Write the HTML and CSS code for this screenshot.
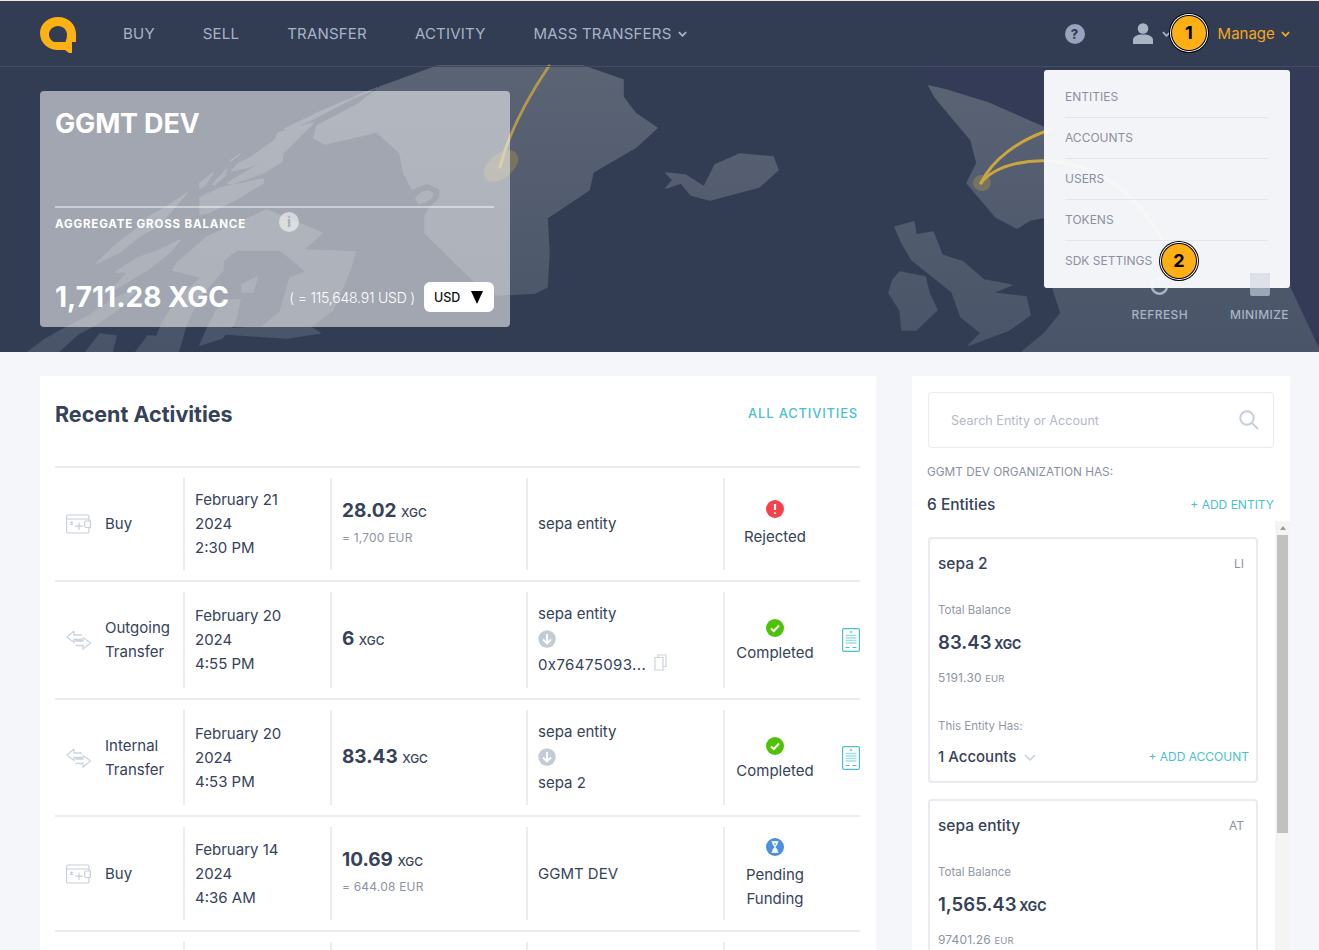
FILE: index.html
```html
<!DOCTYPE html>
<html lang="en">
<head>
  <meta charset="UTF-8">
  <title>GGMT DEV</title>
  <link rel="stylesheet" href="styles.css">
</head>
<body>
  <div class="topline"></div>
  <section class="hero">
    <!-- world map behind the hero -->
    <svg class="map" viewBox="0 1 1319 351" aria-hidden="true">
      <defs>
        <linearGradient id="landfill" gradientUnits="userSpaceOnUse" x1="0" y1="66" x2="0" y2="352">
          <stop offset="0" stop-color="#5a6475"/>
          <stop offset="1" stop-color="#4a5468"/>
        </linearGradient>
      </defs>
      <path class="outer" d="M904 66Q1130 165 1319 350V66Z"/>
      <g fill="url(#landfill)" stroke="url(#landfill)" stroke-width="1.500" stroke-linejoin="round">
        <path d="M438 66H583L623 80V97L635 113 657 128 636 147 593 172 589 190 547 218 549 253 547 287 535 293 497 295 476 283 425 233V216L430 208 440 198 440 189 427 183 412 189 404 173 400 153 377 132 325 144 314 138 317 126 357 105 380 87Z"/>
        <path d="M416 199C418 193 428 189 432 193 434 198 424 204 418 203Z"/>
        <path d="M377 88L322 111 285 129 288 130 313 119 322 114 357 96Z"/>
        <path d="M313 123L278 133 275 140 250 158 238 164 232 171 245 168 263 162 228 183 232 184 263 173 282 161 283 153Z"/>
        <path d="M230 161L240 154 232 160Z"/>
        <path d="M200 183L213 173 205 185 200 188Z"/>
        <path d="M213 184L227 169 222 178 226 175 214 185Z"/>
        <path d="M200 198L220 188 263 179 263 183 233 201 207 213 200 214Z"/>
        <path d="M187 193L165 208 150 216 133 232 118 243 97 263 120 252 140 236 158 226 172 210Z"/>
        <path d="M180 240L160 250 138 258 116 272 128 272 110 292 130 280 150 268 170 252Z"/>
        <path d="M138 288L112 300 87 317 62 330 44 340 28 352H58L78 334 100 322 125 304Z"/>
        <path d="M100 334L86 352H112L116 336Z"/>
        <path d="M148 336L136 352H178L182 338Z"/>
        <path d="M267 210L322 233 303 250 237 250 200 277 173 270 177 263 207 237Z"/>
        <path d="M303 250L355 252 350 270 333 310 310 327 320 333 287 338 226 334 228 329 262 327 280 312 285 295 290 278 306 272 295 262 280 250Z"/>
        <path d="M223 258L207 273 178 298 163 322 150 352H178L187 322 200 297 223 270Z"/>
        <path d="M242 285L257 277 253 292 242 292Z"/>
        <path d="M222 300L208 327 200 345 222 338 235 322 240 300Z"/>
        <path d="M929 86L946 90 988 103 1045 128V217L1030 220 1026 205 1030 220 1017 228 996 217 967 183 977 163 971 140 935 97Z"/>
        <path d="M666 173L685 175 704 187 715 165 740 154 773 157 778 170 759 187 710 200 691 195 681 183 666 188 673 180Z"/>
        <path d="M895 227L914 222 916 235 933 232 942 255 963 262 984 280 1011 285 992 293 1026 297 1030 315 1009 330 969 345 981 333 961 317 952 292 912 260 902 243Z"/>
        <path d="M900 272L925 277 929 293 937 310 916 330 902 330 900 310 889 293 893 280Z"/>
        <path d="M1053 288H1290L1319 350V352H1022L1045 333 1061 313Z"/>
      </g>
      <ellipse class="node" cx="501" cy="166" rx="20" ry="12" transform="rotate(-40 501 166)"/>
      <path class="arc arc-one" d="M549 66C526 100 508 136 500 167"/>
      <ellipse class="node" cx="982" cy="183" rx="9" ry="8"/>
      <path class="arc arc-two" d="M981 183C992 160 1018 140 1050 130"/>
      <path class="arc arc-two" d="M981 183C996 164 1030 158 1060 162 1110 170 1145 205 1165 245"/>
    </svg>

    <header class="topbar">
      <svg class="logo" viewBox="0 0 36 36">
        <path fill-rule="evenodd" d="M18 0C28 0 36 7 36 17V25H32V36H29L25 33H18C8 33 0 26 0 16 0 7 8 0 18 0ZM18 9C13 9 9 13 9 17.500 9 21 11 23.500 14 25H25.500C26.500 22.500 27 20 27 17.500 27 13 23 9 18 9Z"/>
      </svg>
      <nav class="nav">
        <a>BUY</a>
        <a>SELL</a>
        <a>TRANSFER</a>
        <a>ACTIVITY</a>
        <a>MASS TRANSFERS <svg class="chev" viewBox="0 0 10 6"><path d="M1 1l4 4 4-4"/></svg></a>
      </nav>
      <div class="user-area">
        <span class="help">?</span>
        <svg class="person" viewBox="0 0 20 21"><circle cx="10" cy="5.500" r="5.300"/><path d="M0 21V17C0 13.500 4 11.500 10 11.500S20 13.500 20 17V21Z"/></svg>
        <svg class="chev chev-user" viewBox="0 0 10 6"><path d="M1 1l4 4 4-4"/></svg>
        <span class="manage">Manage <svg class="chev" viewBox="0 0 10 6"><path d="M1 1l4 4 4-4"/></svg></span>
      </div>
    </header>

    <div class="hero-body">
      <div class="org-card">
        <h1>GGMT DEV</h1>
        <div class="org-label">
          <span>AGGREGATE GROSS BALANCE</span>
          <span class="info">i</span>
        </div>
        <div class="org-balance">
          <strong>1,711.28 XGC</strong>
          <span class="org-usd">( = 115,648.91 USD )</span>
          <span class="currency">USD <svg viewBox="0 0 12 13"><path d="M0 0H12L6 13Z"/></svg></span>
        </div>
      </div>
      <div class="hero-actions">
        <div class="hero-action">
          <svg viewBox="0 0 20 20"><path d="M17 10A7.500 7.500 0 1 1 13 3.500"/></svg>
          <span>REFRESH</span>
        </div>
        <div class="hero-action">
          <span class="min-box"></span>
          <span>MINIMIZE</span>
        </div>
      </div>
    </div>

    <ul class="manage-menu">
      <li>ENTITIES</li>
      <li>ACCOUNTS</li>
      <li>USERS</li>
      <li>TOKENS</li>
      <li>SDK SETTINGS</li>
    </ul>
    <span class="callout callout-one">1</span>
    <span class="callout callout-two">2</span>
  </section>

  <main class="content">
    <section class="activities">
      <div class="activities-head">
        <h2>Recent Activities</h2>
        <a class="link-all">ALL ACTIVITIES</a>
      </div>

      <div class="row">
        <div class="cell cell-type">
          <svg class="type-icon" viewBox="0 0 25 20"><use href="#wallet"/></svg>
          <span>Buy</span>
        </div>
        <div class="cell cell-lines"><span>February 21</span><span>2024</span><span>2:30 PM</span></div>
        <div class="cell cell-amount">
          <div class="amount">28.02 <small>XGC</small></div>
          <div class="fiat">= 1,700 EUR</div>
        </div>
        <div class="cell cell-lines"><span>sepa entity</span></div>
        <div class="cell cell-status">
          <div class="status status-tall">
            <svg class="st-icon" viewBox="0 0 20 20"><circle cx="10" cy="10" r="9" fill="#f5424a"/><path d="M10 5v6M10 13.500v1.500" stroke="#fff" stroke-width="2.200"/></svg>
            <span>Rejected</span>
          </div>
        </div>
      </div>

      <div class="row">
        <div class="cell cell-type">
          <svg class="type-icon" viewBox="0 0 25 20"><use href="#swap"/></svg>
          <span>Outgoing<br>Transfer</span>
        </div>
        <div class="cell cell-lines"><span>February 20</span><span>2024</span><span>4:55 PM</span></div>
        <div class="cell cell-amount">
          <div class="amount">6 <small>XGC</small></div>
        </div>
        <div class="cell cell-lines cell-route">
          <span>sepa entity</span>
          <svg class="down" viewBox="0 0 18 18"><use href="#down"/></svg>
          <span class="addr addr-hash">0x76475093... <svg class="copy" viewBox="0 0 13 17"><path d="M4 3.500V1H12V12.500H9.500M1 3.500H9V16H1Z"/></svg></span>
        </div>
        <div class="cell cell-status">
          <div class="status">
            <svg class="st-icon" viewBox="0 0 20 20"><use href="#done"/></svg>
            <span>Completed</span>
          </div>
          <svg class="doc" viewBox="0 0 18 24"><use href="#doc"/></svg>
        </div>
      </div>

      <div class="row row-internal">
        <div class="cell cell-type">
          <svg class="type-icon" viewBox="0 0 25 20"><use href="#swap"/></svg>
          <span>Internal<br>Transfer</span>
        </div>
        <div class="cell cell-lines"><span>February 20</span><span>2024</span><span>4:53 PM</span></div>
        <div class="cell cell-amount">
          <div class="amount">83.43 <small>XGC</small></div>
        </div>
        <div class="cell cell-lines cell-route">
          <span>sepa entity</span>
          <svg class="down" viewBox="0 0 18 18"><use href="#down"/></svg>
          <span class="addr">sepa 2</span>
        </div>
        <div class="cell cell-status">
          <div class="status">
            <svg class="st-icon" viewBox="0 0 20 20"><use href="#done"/></svg>
            <span>Completed</span>
          </div>
          <svg class="doc" viewBox="0 0 18 24"><use href="#doc"/></svg>
        </div>
      </div>

      <div class="row row-pending">
        <div class="cell cell-type">
          <svg class="type-icon" viewBox="0 0 25 20"><use href="#wallet"/></svg>
          <span>Buy</span>
        </div>
        <div class="cell cell-lines"><span>February 14</span><span>2024</span><span>4:36 AM</span></div>
        <div class="cell cell-amount">
          <div class="amount">10.69 <small>XGC</small></div>
          <div class="fiat">= 644.08 EUR</div>
        </div>
        <div class="cell cell-lines"><span>GGMT DEV</span></div>
        <div class="cell cell-status">
          <div class="status status-tall">
            <svg class="st-icon" viewBox="0 0 20 20"><circle cx="10" cy="10" r="9" fill="#4a8fe0"/><path d="M6.500 4.500h7M6.500 15.500h7M7.500 5c0 3 2 4 2.500 5-.5 1-2.500 2-2.500 5h5c0-3-2-4-2.500-5 .5-1 2.500-2 2.500-5Z" fill="#fff" stroke="#fff" stroke-width=".8"/><path d="M8.800 6.500h2.400L10 8.500Z" fill="#4a8fe0"/></svg>
            <span>Pending<br>Funding</span>
          </div>
        </div>
      </div>

      <div class="row row-empty">
        <div class="cell cell-type"></div>
        <div class="cell"></div>
        <div class="cell"></div>
        <div class="cell"></div>
        <div class="cell"></div>
      </div>
    </section>

    <aside class="entities">
      <div class="search">
        <span>Search Entity or Account</span>
        <svg viewBox="0 0 20 20"><circle cx="8" cy="8" r="6.800"/><path d="M13 13l6 6"/></svg>
      </div>
      <div class="org-has">GGMT DEV ORGANIZATION HAS:</div>
      <div class="entities-head">
        <h3>6 Entities</h3>
        <a class="link-add">+ ADD ENTITY</a>
      </div>
      <div class="entity-scroll">
        <div class="entity-list">
          <article class="entity">
            <div class="entity-top"><h4>sepa 2</h4><span>LI</span></div>
            <div class="muted">Total Balance</div>
            <div class="entity-amount">83.43 <small>XGC</small></div>
            <div class="entity-fiat">5191.30 <small>EUR</small></div>
            <div class="muted muted-has">This Entity Has:</div>
            <div class="entity-foot">
              <span class="accounts">1 Accounts <svg class="acc-chev" viewBox="0 0 12 8"><path d="M1 1l5 5 5-5"/></svg></span>
              <a class="link-add">+ ADD ACCOUNT</a>
            </div>
          </article>
          <article class="entity">
            <div class="entity-top"><h4>sepa entity</h4><span>AT</span></div>
            <div class="muted">Total Balance</div>
            <div class="entity-amount">1,565.43 <small>XGC</small></div>
            <div class="entity-fiat">97401.26 <small>EUR</small></div>
          </article>
        </div>
        <div class="scrollbar">
          <span class="scroll-up"></span>
          <span class="scroll-thumb"></span>
        </div>
      </div>
    </aside>
  </main>

  <!-- shared icons -->
  <svg class="sprites" aria-hidden="true">
    <symbol id="wallet" viewBox="0 0 25 20">
      <path d="M23 6.500V2.500C23 1.500 22.500 1 21.500 1H2C1 1 .6 1.500 .6 2.500V17.500C.6 18.500 1 19 2 19H21.500C22.500 19 23 18.500 23 17.500V14M.6 5H23M13 8.500V16M9 12.200H17M4 8l3 2.500M7 8L4 10.500M5.500 7.500V11M20 7H24.400V13.500H20C19 13.500 18.600 13 18.600 12V8.500C18.600 7.500 19 7 20 7Z" fill="none" stroke="#c6d0da" stroke-width="1.200"/>
    </symbol>
    <symbol id="swap" viewBox="0 0 25 20">
      <path d="M8 1L1 7 8 12.500V9.500H16M16 5H8V1M17 7.500V11H9.500M17 7.500L24.500 13 17 19V15.500H9.500" fill="none" stroke="#ccd5de" stroke-width="1.300"/>
    </symbol>
    <symbol id="down" viewBox="0 0 18 18">
      <circle cx="9" cy="9" r="8.700" fill="#c3ccd5"/>
      <path d="M9 4v9M5 9.500l4 4 4-4" fill="none" stroke="#fff" stroke-width="1.800"/>
    </symbol>
    <symbol id="done" viewBox="0 0 20 20">
      <circle cx="10" cy="10" r="9" fill="#4fc207"/>
      <path d="M6 10.500l2.800 2.500L14 7.500" fill="none" stroke="#fff" stroke-width="2"/>
    </symbol>
    <symbol id="doc" viewBox="0 0 18 24">
      <rect x=".6" y=".6" width="16.800" height="22.800" rx="1.500" fill="#fff" stroke="#4fbecb" stroke-width="1.200"/>
      <circle cx="9" cy="4" r="1.300" fill="#8fd3dc"/>
      <path d="M3.500 7.500h11M3.500 10h11M3.500 12.500h11M3.500 15h11" stroke="#a5dde3" stroke-width="1.500"/>
      <path d="M3.500 19.500h4M10.500 19.500h4" stroke="#4fbecb"/>
    </symbol>
  </svg>
</body>
</html>
```

FILE: styles.css
```css
/* Base */
* {
  margin: 0;
  padding: 0;
  box-sizing: border-box;
}

html,
body {
  height: 950px;
  overflow: hidden;
}

body {
  font-family: Inter, "Noto Sans", sans-serif;
  background-color: #f5f6f9;
  color: #36425a;
  font-size: 15px;
}

ul {
  list-style: none;
}

.sprites {
  position: absolute;
  width: 0;
  height: 0;
}

.topline {
  height: 1px;
  background-color: #f3e9d8;
}

/* Hero */
.hero {
  position: relative;
  height: 351px;
  background-color: #323d54;
}

.map {
  position: absolute;
  top: 0;
  left: 0;
  width: 1319px;
  height: 351px;
}

.map .outer {
  fill: #343b57;
}

.map .node {
  fill: #c9a544;
  opacity: 0.3;
}

.map .arc {
  fill: none;
  stroke-width: 3;
  stroke-linecap: round;
}

.map .arc-one {
  stroke: #b3974c;
}

.map .arc-two {
  stroke: #cba63f;
}

.topbar {
  position: relative;
  display: flex;
  align-items: center;
  height: 66px;
  padding: 0 29px 0 40px;
  border-bottom: 1px solid #414c61;
}

.logo {
  width: 36px;
  height: 36px;
  fill: #fdb113;
  margin-right: 47px;
  margin-top: 2px;
}

.nav {
  display: flex;
  gap: 48px;
}

.nav a {
  color: #a8b3c6;
  font-size: 15px;
  letter-spacing: 0.2px;
  white-space: nowrap;
}

.chev {
  width: 9px;
  height: 6px;
  margin-left: 2px;
  vertical-align: 2px;
  fill: none;
  stroke: currentColor;
  stroke-width: 2;
}

.user-area {
  display: flex;
  align-items: center;
  margin-left: auto;
  color: #a8b3c6;
}

.help {
  width: 20px;
  height: 20px;
  border-radius: 50%;
  background-color: #9aa3bd;
  color: #323d54;
  font-size: 13px;
  font-weight: 800;
  line-height: 20px;
  text-align: center;
}

.person {
  width: 20px;
  height: 21px;
  margin-left: 48px;
  fill: #a9b5c3;
}

.chev-user {
  margin-left: 9px;
}

.manage {
  margin-left: 47px;
  color: #f5a81c;
  white-space: nowrap;
}

.manage .chev {
  margin-left: 2px;
}

.hero-body {
  position: relative;
  display: flex;
  justify-content: space-between;
  padding: 24px 30px 0 40px;
}

.org-card {
  width: 470px;
  height: 236px;
  padding: 16px 16px 0 15px;
  border-radius: 4px;
  background-color: rgba(255, 255, 255, 0.54);
  color: #fff;
}

.org-card h1 {
  height: 84px;
  font-size: 27px;
  font-weight: 700;
  line-height: 34px;
  letter-spacing: -0.2px;
}

.org-label {
  display: flex;
  align-items: center;
  height: 33px;
  margin-top: 15px;
  border-top: 2px solid rgba(255, 255, 255, 0.45);
  font-size: 11.500px;
  font-weight: 700;
  letter-spacing: 0.85px;
}

.info {
  width: 20px;
  height: 20px;
  margin-left: 33px;
  margin-top: -3px;
  border-radius: 50%;
  background-color: rgba(255, 255, 255, 0.55);
  color: #aab0b9;
  font-size: 13px;
  font-weight: 800;
  line-height: 20px;
  letter-spacing: 0;
  text-align: center;
}

.org-balance {
  display: flex;
  align-items: center;
  margin-top: 41px;
}

.org-balance strong {
  font-size: 28px;
  font-weight: 700;
}

.org-usd {
  margin-left: auto;
  font-size: 14px;
  font-weight: 300;
  letter-spacing: -0.2px;
}

.currency {
  display: flex;
  align-items: center;
  justify-content: space-between;
  width: 70px;
  height: 30px;
  margin-left: 9px;
  padding: 0 11px 0 10px;
  border-radius: 6px;
  background-color: #fff;
  color: #111;
  font-size: 12.500px;
  font-weight: 500;
}

.currency svg {
  width: 12px;
  height: 13px;
}

.hero-actions {
  display: flex;
  gap: 42px;
  margin-top: 185px;
  color: #a8b3c6;
  font-size: 12px;
  letter-spacing: 0.4px;
  font-weight: 500;
}

.hero-action {
  display: flex;
  flex-direction: column;
  align-items: center;
  gap: 11px;
}

.hero-action svg {
  width: 20px;
  height: 20px;
  fill: none;
  stroke: #a8b3c6;
  stroke-width: 2.500;
}

.min-box {
  width: 20px;
  height: 20px;
  border-radius: 2px;
  background-color: #9ca6b6;
}

/* Manage dropdown and the numbered marks */
.manage-menu {
  position: absolute;
  top: 69px;
  left: 1044px;
  width: 246px;
  height: 218px;
  padding: 7px 22px 0 21px;
  border-radius: 3px;
  background-color: rgba(248, 249, 251, 0.975);
  color: #8b90a0;
  font-size: 12px;
}

/* minimize button showing faintly through the menu */
.manage-menu::after {
  content: "";
  position: absolute;
  right: 20px;
  bottom: 0;
  width: 20px;
  height: 15px;
  background-color: rgba(150, 160, 180, 0.25);
}

.manage-menu li {
  height: 41px;
  line-height: 39px;
  border-bottom: 1px solid #e3e5ea;
}

.manage-menu li:last-child {
  border-bottom: 0;
}

.callout {
  position: absolute;
  width: 34px;
  height: 34px;
  border-radius: 50%;
  background-color: #fdb016;
  box-shadow: 0 0 0 1px #000, 0 0 0 2px #fff, 0 0 0 3px #000;
  color: #000;
  font-size: 18px;
  font-weight: 700;
  line-height: 34px;
  text-align: center;
}

.callout-one {
  top: 15px;
  left: 1172px;
}

.callout-two {
  top: 243px;
  left: 1162px;
}

/* Main area */
.content {
  display: flex;
  gap: 36px;
  padding: 24px 29px 0 40px;
}

.activities {
  width: 836px;
  height: 574px;
  overflow: hidden;
  padding: 0 16px 0 15px;
  background-color: #fff;
}

.activities-head {
  display: flex;
  justify-content: space-between;
  height: 90px;
  padding-top: 24px;
}

.activities-head h2 {
  font-size: 21.500px;
  font-weight: 700;
  line-height: 28px;
}

.link-all {
  color: #4cbfce;
  font-size: 13px;
  font-weight: 500;
  letter-spacing: 0.8px;
  margin-top: 5px;
  margin-right: 2px;
}

.row {
  display: grid;
  grid-template-columns: 128px 147px 196px 197px 137px;
  padding: 10px 0;
  border-top: 2px solid #e9edf2;
}

.cell {
  display: flex;
  min-height: 92px;
  border-left: 2px solid #e9edf2;
  padding-left: 10px;
  line-height: 24px;
}

.row-pending .cell {
  min-height: 93px;
}

.row-empty .cell {
  min-height: 60px;
}

.cell-type {
  align-items: center;
  gap: 14px;
  padding-left: 11px;
  border-left: 0;
}

.type-icon {
  flex: none;
  width: 25px;
  height: 20px;
}

.cell-lines {
  flex-direction: column;
  justify-content: center;
}

.cell-route {
  align-items: flex-start;
  min-height: 96px;
}

.row-internal .cell-route {
  min-height: 95px;
}

.down {
  width: 18px;
  height: 18px;
  margin: 4px 0;
}

.addr {
  display: flex;
  align-items: center;
  gap: 8px;
  height: 26px;
  white-space: nowrap;
}

.addr-hash {
  letter-spacing: 0.4px;
}

.copy {
  width: 13px;
  height: 17px;
  margin-top: -5px;
  fill: none;
  stroke: #ccd5de;
  stroke-width: 1.200;
}

.cell-amount {
  flex-direction: column;
  justify-content: center;
}

.amount {
  font-size: 19px;
  font-weight: 700;
  line-height: 26px;
}

.amount small {
  font-size: 12px;
  font-weight: 500;
}

.fiat {
  margin: 3px 0 4px;
  color: #8d94a0;
  font-size: 12px;
  line-height: 18px;
  letter-spacing: 0.2px;
}

.cell-status {
  position: relative;
  align-items: center;
  padding-left: 0;
}

.status {
  display: flex;
  flex-direction: column;
  align-items: center;
  gap: 3px;
  width: 100px;
  margin-top: 3px;
  text-align: center;
}

.status-tall {
  gap: 6px;
  margin-top: 0;
}

.st-icon {
  width: 20px;
  height: 20px;
}

.doc {
  width: 18px;
  height: 24px;
  margin-left: auto;
}

/* Entities column */
.entities {
  width: 378px;
  height: 574px;
  overflow: hidden;
  padding: 16px 16px 0;
  background-color: #fff;
}

.search {
  display: flex;
  align-items: center;
  justify-content: space-between;
  height: 56px;
  padding: 0 14px 0 22px;
  border: 1px solid #e9ebef;
  border-radius: 4px;
  color: #b4bac6;
  font-size: 12.600px;
}

.search svg {
  width: 20px;
  height: 20px;
  fill: none;
  stroke: #c6d0da;
  stroke-width: 2;
}

.org-has {
  margin: 16px 0 0 -1px;
  color: #8a909e;
  font-size: 11.800px;
  line-height: 16px;
}

.entities-head {
  display: flex;
  align-items: center;
  justify-content: space-between;
  margin: 12px 0 0 -1px;
  height: 24px;
}

.entities-head h3 {
  font-size: 15.500px;
  font-weight: 500;
}

.link-add {
  color: #4cbfce;
  font-size: 12px;
}

.entity-scroll {
  display: flex;
  justify-content: space-between;
  margin: 5px -16px 0 0;
  height: 429px;
}

.entity-list {
  width: 330px;
  padding-top: 16px;
}

.entity {
  height: 246px;
  margin-bottom: 16px;
  padding: 12px 7px 0 8px;
  border: 2px solid #e9ebf0;
  border-radius: 4px;
}

.entity-top {
  display: flex;
  align-items: center;
  justify-content: space-between;
  height: 24px;
  padding-right: 5px;
}

.entity-top h4 {
  font-size: 15.500px;
  font-weight: 500;
}

.entity-top span {
  color: #8a909e;
  font-size: 12px;
}

.muted {
  margin-top: 26px;
  color: #9298a5;
  font-size: 11.500px;
  line-height: 18px;
}

.entity-amount {
  margin-top: 9px;
  font-size: 18.600px;
  font-weight: 600;
  line-height: 28px;
}

.entity-amount small {
  font-size: 12.500px;
  font-weight: 700;
  margin-left: -2px;
}

.entity-fiat {
  margin-top: 10px;
  color: #8d94a0;
  font-size: 12px;
  line-height: 18px;
  letter-spacing: 0.15px;
}

.entity-fiat small {
  font-size: 9.500px;
}

.muted-has {
  margin-top: 29px;
}

.entity-foot {
  display: flex;
  align-items: center;
  justify-content: space-between;
  margin-top: 9px;
  height: 24px;
}

.accounts {
  font-size: 15px;
  font-weight: 500;
}

.acc-chev {
  width: 12px;
  height: 8px;
  margin-left: 4px;
  fill: none;
  stroke: #c6d0da;
  stroke-width: 1.500;
}

.scrollbar {
  display: flex;
  flex-direction: column;
  align-items: center;
  width: 15px;
  background-color: #f4f4f5;
}

.scroll-up {
  width: 0;
  height: 0;
  margin: 5px 0 5px;
  border: 3.500px solid transparent;
  border-top: 0;
  border-bottom: 4px solid #9a9a9a;
}

.scroll-thumb {
  width: 11px;
  height: 298px;
  background-color: #c1c1c1;
}
```
